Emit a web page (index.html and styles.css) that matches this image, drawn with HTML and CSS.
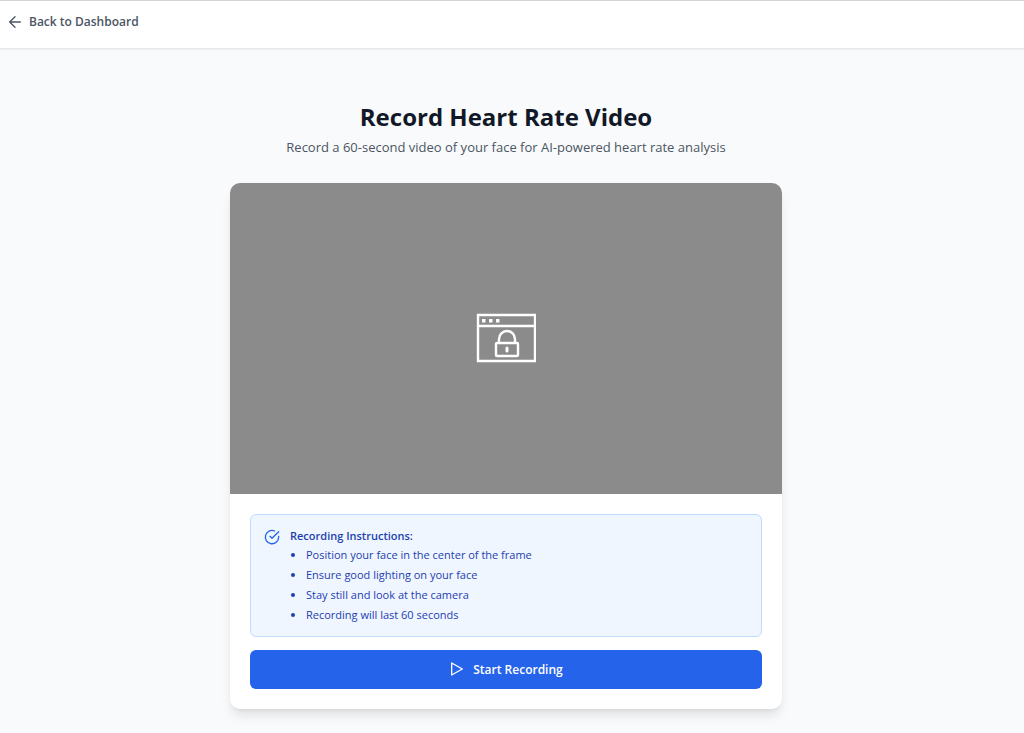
FILE: index.html
```html
<!DOCTYPE html>
<html lang="en">
<head>
<meta charset="UTF-8">
<meta name="viewport" content="width=device-width, initial-scale=1.0">
<title>Record Heart Rate Video</title>
<link rel="stylesheet" href="styles.css">
</head>
<body>

<header class="topbar">
    <a href="#" class="back-link">
        <svg class="back-icon" viewBox="0 0 24 24" fill="none" stroke="currentColor" stroke-width="2" stroke-linecap="round" stroke-linejoin="round" aria-hidden="true">
            <path d="M12 20l-8-8 8-8M20 12H4"/>
        </svg>
        Back to Dashboard
    </a>
</header>

<main class="page">
    <h1 class="title">Record Heart Rate Video</h1>
    <p class="subtitle">Record a 60-second video of your face for AI-powered heart rate analysis</p>

    <section class="card">
        <!-- Camera preview, blocked until permission is given -->
        <div class="preview">
            <svg class="preview-icon" viewBox="0 0 60 50" fill="none" stroke="#fff" stroke-width="2.4" role="img" aria-label="Camera blocked">
                <path d="M2 2h57v46H2zM2 13h57"/>
                <path d="M6 6h3.500v3.500H6zM13 6h3.500v3.500H13zM20 6h3.500v3.500H20z" fill="#fff" stroke="none"/>
                <rect x="20" y="30" width="22" height="13" rx="1"/>
                <path d="M23 30v-4a8 8 0 0 1 16 0v4"/>
                <path d="M31 35v3" stroke-width="3" stroke-linecap="round"/>
            </svg>
        </div>

        <div class="card-body">
            <div class="instructions">
                <svg class="check-icon" viewBox="0 0 24 24" fill="none" stroke="currentColor" stroke-width="2" stroke-linecap="round" stroke-linejoin="round" aria-hidden="true">
                    <path d="M22 11V12a10 10 0 1 1-6-9"/>
                    <path d="M22 4L12 14l-3-3"/>
                </svg>
                <div>
                    <h2 class="instructions-title">Recording Instructions:</h2>
                    <ul class="instructions-list">
                        <li>Position your face in the center of the frame</li>
                        <li>Ensure good lighting on your face</li>
                        <li>Stay still and look at the camera</li>
                        <li>Recording will last 60 seconds</li>
                    </ul>
                </div>
            </div>

            <button type="button" class="record-button">
                <svg class="play-icon" viewBox="0 0 24 24" fill="none" stroke="currentColor" stroke-width="2" stroke-linecap="round" stroke-linejoin="round" aria-hidden="true">
                    <path d="M4 3l16 9-16 9z"/>
                </svg>
                Start Recording
            </button>
        </div>
    </section>
</main>

</body>
</html>
```
FILE: styles.css
```css
* {
    box-sizing: border-box;
}
body {
    margin: 0;
    background-color: #f9fafb;
    color: #111827;
    font-family: "Segoe UI", "Open Sans", "Noto Sans", sans-serif;
}
.topbar {
    padding: 11px 7px 16px;
    background-color: #fff;
    border-top: 1px solid #d4d4d4;
    border-bottom: 1px solid #e5e7eb;
    box-shadow: 0 1px 2px rgba(0, 0, 0, 0.05);
}
.back-link {
    display: flex;
    align-items: center;
    gap: 6px;
    width: fit-content;
    color: #4b5563;
    font-size: 12px;
    font-weight: 600;
    line-height: 20px;
    text-decoration: none;
}
.back-icon {
    width: 16px;
    height: 16px;
}
.page {
    padding: 53px 32px 24px 20px;
}
.title {
    margin: 0 0 5px;
    font-size: 24px;
    font-weight: 700;
    line-height: 30px;
    text-align: center;
}
.subtitle {
    margin: 0 0 26px;
    color: #4b5563;
    font-size: 13px;
    line-height: 20px;
    text-align: center;
}
.card {
    max-width: 552px;
    margin: 0 auto;
    overflow: hidden;
    background-color: #fff;
    border-radius: 10px;
    box-shadow: 0 8px 12px -2px rgba(0, 0, 0, 0.1), 0 3px 5px -3px rgba(0, 0, 0, 0.1);
}
.preview {
    display: flex;
    align-items: center;
    justify-content: center;
    aspect-ratio: 16 / 9;
    background-color: #8b8b8c;
}
.preview-icon {
    width: 60px;
    height: 50px;
}
.card-body {
    padding: 20px;
}
.instructions {
    display: flex;
    gap: 10px;
    margin-bottom: 13px;
    padding: 11px 13px;
    background-color: #eff6ff;
    border: 1px solid #bfdbfe;
    border-radius: 6px;
    color: #1e40af;
    font-size: 11px;
    line-height: 20px;
}
.check-icon {
    flex: none;
    width: 16px;
    height: 16px;
    margin-top: 3px;
    color: #2563eb;
}
.instructions-title {
    margin: 0;
    font-size: 11px;
    font-weight: 600;
    line-height: 19px;
}
.instructions-list {
    margin: 0;
    padding-left: 16px;
}
.record-button {
    display: flex;
    align-items: center;
    justify-content: center;
    gap: 8px;
    width: 100%;
    padding: 10px;
    background-color: #2563eb;
    border: none;
    border-radius: 6px;
    color: #fff;
    font-family: inherit;
    font-size: 12px;
    font-weight: 600;
    line-height: 19px;
    cursor: pointer;
}
.record-button:hover {
    background-color: #1d4ed8;
}
.play-icon {
    width: 16px;
    height: 16px;
}
```
